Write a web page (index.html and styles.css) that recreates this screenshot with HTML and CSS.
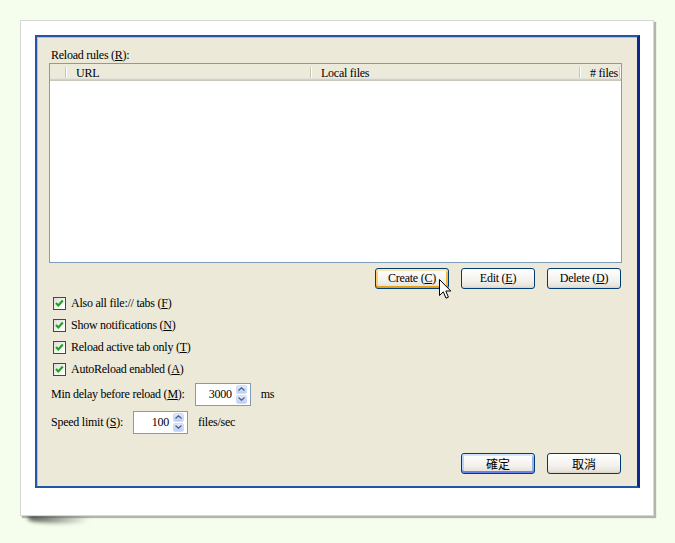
FILE: index.html
```html
<!DOCTYPE html>
<html>
<head>
<meta charset="utf-8">
<link rel="stylesheet" href="styles.css">
</head>
<body>
<div class="page">
  <div class="frame">
    <div class="dialog">
      <div class="label">Reload rules (<u>R</u>):</div>
      <div class="list">
        <div class="list-head">
          <div class="col c0"></div>
          <div class="col c1">URL</div>
          <div class="col c2">Local files</div>
          <div class="col c3"># files</div>
          <div class="col c4"></div>
        </div>
      </div>
      <div class="btn-row">
        <div class="btn hot">Create (<u>C</u>)
          <svg class="cursor" width="13" height="21" viewBox="0 0 13 21"><path d="M0.5 0.5 L0.5 16.5 L4.3 12.8 L7 19.2 L9.4 18.2 L6.8 12 L11.8 12 Z" fill="#fff" stroke="#000" stroke-width="1" stroke-linejoin="miter"/></svg>
        </div>
        <div class="btn">Edit (<u>E</u>)</div>
        <div class="btn">Delete (<u>D</u>)</div>
      </div>
      <div class="checks">
        <div class="check"><span class="box"><svg width="11" height="11" viewBox="0 0 11 11"><path d="M2 5 L4.3 7.4 L8.8 2.6" fill="none" stroke="#21a121" stroke-width="2.2"/></svg></span><span>Also all file:// tabs (<u>F</u>)</span></div>
        <div class="check"><span class="box"><svg width="11" height="11" viewBox="0 0 11 11"><path d="M2 5 L4.3 7.4 L8.8 2.6" fill="none" stroke="#21a121" stroke-width="2.2"/></svg></span><span>Show notifications (<u>N</u>)</span></div>
        <div class="check"><span class="box"><svg width="11" height="11" viewBox="0 0 11 11"><path d="M2 5 L4.3 7.4 L8.8 2.6" fill="none" stroke="#21a121" stroke-width="2.2"/></svg></span><span>Reload active tab only (<u>T</u>)</span></div>
        <div class="check"><span class="box"><svg width="11" height="11" viewBox="0 0 11 11"><path d="M2 5 L4.3 7.4 L8.8 2.6" fill="none" stroke="#21a121" stroke-width="2.2"/></svg></span><span>AutoReload enabled (<u>A</u>)</span></div>
      </div>
      <div class="field f1">
        <span>Min delay before reload (<u>M</u>):</span>
        <div class="spin w56">
          <span class="val">3000</span>
          <span class="arrows">
            <span class="half"><svg width="7" height="4" viewBox="0 0 7 4"><path d="M0.5 3.5 L3.5 0.8 L6.5 3.5" fill="none" stroke="#4d6185" stroke-width="1.3"/></svg></span>
            <span class="half"><svg width="7" height="4" viewBox="0 0 7 4"><path d="M0.5 0.5 L3.5 3.2 L6.5 0.5" fill="none" stroke="#4d6185" stroke-width="1.3"/></svg></span>
          </span>
        </div>
        <span>ms</span>
      </div>
      <div class="field f2">
        <span>Speed limit (<u>S</u>):</span>
        <div class="spin w55">
          <span class="val">100</span>
          <span class="arrows">
            <span class="half"><svg width="7" height="4" viewBox="0 0 7 4"><path d="M0.5 3.5 L3.5 0.8 L6.5 3.5" fill="none" stroke="#4d6185" stroke-width="1.3"/></svg></span>
            <span class="half"><svg width="7" height="4" viewBox="0 0 7 4"><path d="M0.5 0.5 L3.5 3.2 L6.5 0.5" fill="none" stroke="#4d6185" stroke-width="1.3"/></svg></span>
          </span>
        </div>
        <span>files/sec</span>
      </div>
      <div class="footer">
        <div class="btn def cjk">確定</div>
        <div class="btn cjk">取消</div>
      </div>
    </div>
  </div>
</div>
</body>
</html>
```

FILE: styles.css
```css
body {
  margin: 0;
  background: #f5fdec;
  font-family: "Liberation Serif", "Times New Roman", "DejaVu Serif", serif;
  font-size: 12px;
  letter-spacing: -0.25px;
  color: #000;
}
.page {
  padding: 20px;
}
.frame {
  position: relative;
  width: 634px;
  height: 496px;
  box-sizing: border-box;
  background: #fff;
  border: 1px solid #d6d6d6;
  padding: 14px;
  box-shadow: 2px 2px 1px rgba(0, 0, 0, 0.28);
}
.frame::after {
  content: "";
  position: absolute;
  left: 7px;
  top: 100%;
  width: 62px;
  height: 7px;
  margin-top: 1px;
  background: linear-gradient(to right, rgba(0,0,0,0.75), rgba(0,0,0,0.35) 50%, rgba(0,0,0,0));
  filter: blur(2px);
  border-radius: 0 0 40% 60%;
  z-index: -1;
}
.dialog {
  width: 605px;
  height: 453px;
  box-sizing: border-box;
  background: #ece9d8;
  border: 2px solid #2456a8;
  border-right: 3px solid #0a2a92;
  box-shadow: inset 1px 1px 0 #a9c1e8;
  padding: 10px 15px 12px 12px;
  display: flex;
  flex-direction: column;
}
.label {
  height: 16px;
  line-height: 16px;
  padding-left: 2px;
}
.list {
  height: 200px;
  box-sizing: border-box;
  border: 1px solid #7f9db9;
  background: #fff;
}
.list-head {
  display: grid;
  grid-template-columns: 16px 245px 269px 40px 1fr;
  height: 17px;
  background: linear-gradient(to bottom, #ebeadb 0 14px, #e2e2da 14px 15px, #d6d2c2 15px 16px, #cbc7b8 16px 17px);
}
.col {
  position: relative;
  line-height: 16px;
  padding-top: 1px;
  white-space: nowrap;
}
.c0::after, .c1::after, .c2::after, .c3::after {
  content: "";
  position: absolute;
  right: 0;
  top: 3px;
  bottom: 3px;
  width: 1px;
  background: #c7c5b2;
  box-shadow: 1px 0 0 #fff;
}
.c1, .c2 {
  padding-left: 10px;
}
.c3 {
  text-align: right;
  padding-right: 2px;
}
.btn-row {
  display: flex;
  justify-content: flex-end;
  gap: 12px;
  margin-top: 5px;
  padding-right: 1px;
}
.btn {
  position: relative;
  width: 74px;
  height: 21px;
  box-sizing: border-box;
  border: 1px solid #003c74;
  border-radius: 3px;
  background: linear-gradient(to bottom, #ffffff, #f3f2ee 60%, #e6e3da 90%, #d6d0c5);
  text-align: center;
  line-height: 19px;
}
.btn.hot {
  box-shadow: inset 0 2px 0 #fde7ad, inset 0 -2px 0 #e5a01a, inset 2px 0 0 #f9cd6a, inset -2px 0 0 #f4b93c;
}
.btn.def {
  box-shadow: inset 0 2px 0 #cee7ff, inset 0 -2px 0 #6982ee, inset 2px 0 0 #b8d2f8, inset -2px 0 0 #97b0f0;
}
.cursor {
  position: absolute;
  left: 63px;
  top: 10px;
  z-index: 2;
}
.checks {
  margin-top: 3px;
  display: flex;
  flex-direction: column;
}
.check {
  height: 22px;
  display: flex;
  align-items: center;
  gap: 5px;
  padding-left: 4px;
}
.box {
  width: 13px;
  height: 13px;
  box-sizing: border-box;
  border: 1px solid #1c5180;
  background: linear-gradient(135deg, #dcdcd7, #ffffff 85%);
  display: flex;
  align-items: center;
  justify-content: center;
}
.field {
  height: 24px;
  display: flex;
  align-items: center;
  gap: 10px;
  padding-left: 2px;
}
.f1 {
  margin-top: 2px;
}
.f2 {
  margin-top: 4px;
}
.spin {
  height: 23px;
  box-sizing: border-box;
  border: 1px solid #7f9db9;
  background: #fff;
  display: flex;
  align-items: stretch;
}
.w56 {
  width: 56px;
}
.w55 {
  width: 55px;
}
.val {
  flex: 1;
  text-align: right;
  line-height: 21px;
  padding-right: 4px;
}
.arrows {
  width: 11px;
  margin: 1px 3px 1px 0;
  display: flex;
  flex-direction: column;
  gap: 1px;
}
.half {
  flex: 1;
  border-radius: 2px;
  border: 1px solid #d2dcf7;
  background: linear-gradient(to bottom, #dfe8fd, #bccffa);
  display: flex;
  align-items: center;
  justify-content: center;
}
.footer {
  margin-top: auto;
  display: flex;
  justify-content: flex-end;
  gap: 12px;
  padding-right: 1px;
}
.cjk {
  font-family: "Noto Sans CJK TC", sans-serif;
  font-size: 12px;
  letter-spacing: 0;
}
```
